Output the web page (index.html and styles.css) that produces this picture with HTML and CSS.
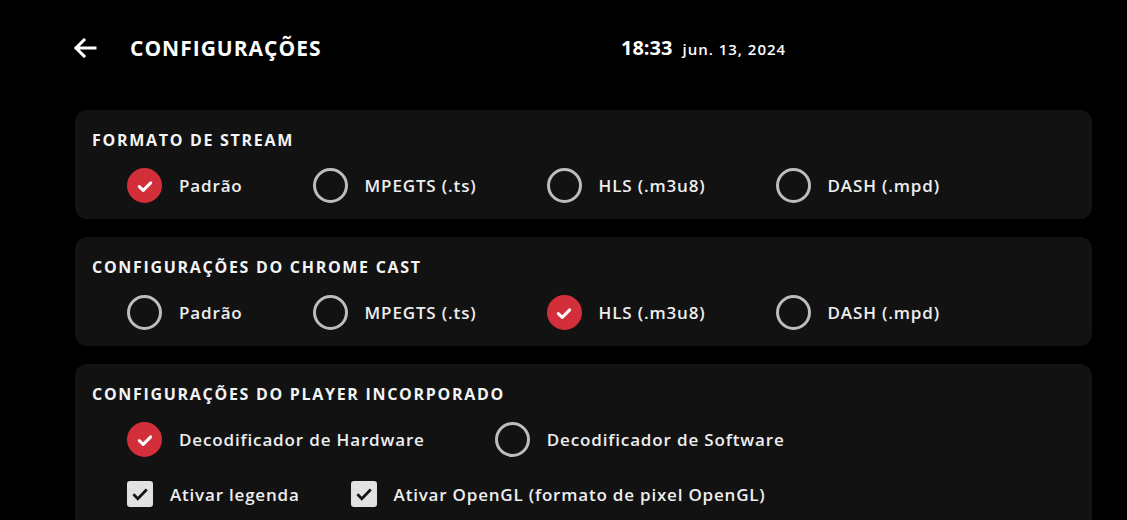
FILE: index.html
```html
<!DOCTYPE html>
<html lang="pt">
<head>
<meta charset="utf-8">
<link rel="stylesheet" href="styles.css">
</head>
<body>
<header class="topbar">
  <div class="left">
    <svg class="back" width="24" height="20" viewBox="0 0 24 20"><path d="M22 10H3M11 2L3 10l8 8" fill="none" stroke="#fff" stroke-width="3" stroke-linecap="square"/></svg>
    <h1 class="title">CONFIGURAÇÕES</h1>
  </div>
  <div class="clock"><span class="time">18:33</span><span class="date">jun. 13, 2024</span></div>
</header>
<main class="content">
  <section class="card">
    <h2 class="card-title">FORMATO DE STREAM</h2>
    <div class="row">
      <label class="opt"><span class="radio on"><svg viewBox="0 0 16 16"><path d="M4.2 8.4l2.6 2.5L11.8 5.9" fill="none" stroke="#fff" stroke-width="2" stroke-linecap="round" stroke-linejoin="round"/></svg></span>Padrão</label>
      <label class="opt"><span class="radio"></span>MPEGTS (.ts)</label>
      <label class="opt"><span class="radio"></span>HLS (.m3u8)</label>
      <label class="opt"><span class="radio"></span>DASH (.mpd)</label>
    </div>
  </section>
  <section class="card">
    <h2 class="card-title">CONFIGURAÇÕES DO CHROME CAST</h2>
    <div class="row">
      <label class="opt"><span class="radio"></span>Padrão</label>
      <label class="opt"><span class="radio"></span>MPEGTS (.ts)</label>
      <label class="opt"><span class="radio on"><svg viewBox="0 0 16 16"><path d="M4.2 8.4l2.6 2.5L11.8 5.9" fill="none" stroke="#fff" stroke-width="2" stroke-linecap="round" stroke-linejoin="round"/></svg></span>HLS (.m3u8)</label>
      <label class="opt"><span class="radio"></span>DASH (.mpd)</label>
    </div>
  </section>
  <section class="card card-last">
    <h2 class="card-title">CONFIGURAÇÕES DO PLAYER INCORPORADO</h2>
    <div class="row">
      <label class="opt"><span class="radio on"><svg viewBox="0 0 16 16"><path d="M4.2 8.4l2.6 2.5L11.8 5.9" fill="none" stroke="#fff" stroke-width="2" stroke-linecap="round" stroke-linejoin="round"/></svg></span>Decodificador de Hardware</label>
      <label class="opt"><span class="radio"></span>Decodificador de Software</label>
    </div>
    <div class="row row-checks">
      <label class="chk"><span class="box"><svg viewBox="0 0 16 16"><path d="M3.2 8.2l3.2 3.2L12.9 4.7" fill="none" stroke="#141414" stroke-width="2"/></svg></span>Ativar legenda</label>
      <label class="chk"><span class="box"><svg viewBox="0 0 16 16"><path d="M3.2 8.2l3.2 3.2L12.9 4.7" fill="none" stroke="#141414" stroke-width="2"/></svg></span>Ativar OpenGL (formato de pixel OpenGL)</label>
    </div>
  </section>
</main>
</body>
</html>
```
FILE: styles.css
```css
* { box-sizing: border-box; margin: 0; padding: 0; }
html, body { background: #000; height: 100%; overflow: hidden; }
body {
  font-family: "Open Sans", "DejaVu Sans", sans-serif;
  color: #f2f2f2;
}
.topbar {
  height: 96px;
  padding: 0 0 1px 73px;
  display: flex;
  align-items: center;
}
.left { display: flex; align-items: center; width: 548px; }
.back { width: 24px; height: 20px; margin-right: 33px; }
.title { font-size: 21px; font-weight: 700; letter-spacing: 1px; color: #fff; }
.clock { display: flex; align-items: baseline; gap: 10px; }
.time { font-size: 20px; font-weight: 700; color: #fff; }
.date { font-size: 15px; font-weight: 600; color: #fff; letter-spacing: 1px; }
.content {
  padding: 14px 35px 0 75px;
  display: flex;
  flex-direction: column;
  gap: 18px;
}
.card {
  background: #121212;
  border-radius: 12px;
  padding: 19px 17px 16px;
  height: 109px;
}
.card-last { height: 170px; }
.card-title { font-size: 16px; font-weight: 700; color: #f4f4f4; letter-spacing: 1.7px; line-height: 22px; }
.row {
  display: flex;
  align-items: center;
  gap: 70px;
  padding-left: 35px;
  margin-top: 17px;
}
.opt {
  display: flex;
  align-items: center;
  gap: 17px;
  font-size: 17px;
  font-weight: 600;
  letter-spacing: 0.85px;
  color: #eee;
}
.radio {
  width: 35px; height: 35px;
  border-radius: 50%;
  border: 3px solid #bdbdbd;
  display: flex; align-items: center; justify-content: center;
}
.radio.on { background: #d32f3a; border-color: #d32f3a; }
.radio svg { width: 24px; height: 24px; }
.row-checks { margin-top: 24px; gap: 51px; }
.chk {
  display: flex; align-items: center; gap: 17px;
  font-size: 17px; font-weight: 600; letter-spacing: 0.8px; color: #eee;
}
.box {
  width: 26px; height: 26px; border-radius: 3px;
  background: #e2e2e2;
  display: flex; align-items: center; justify-content: center;
}
.box svg { width: 22px; height: 22px; }
```
